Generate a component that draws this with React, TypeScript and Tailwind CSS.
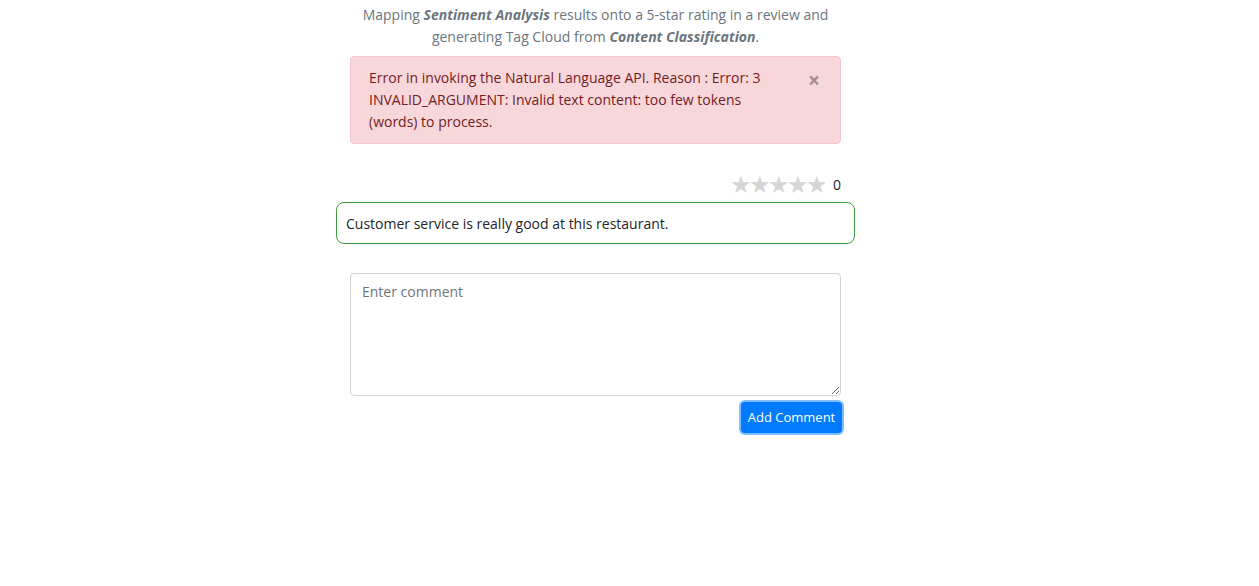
const font = { fontFamily: '"Open Sans", "Noto Sans", sans-serif' };

function Stars({ value }: { value: number }) {
  return (
    <div className="flex items-center justify-end gap-[8px] h-[22px]">
      <div className="flex text-[24px] leading-none text-[#d5d5d5] tracking-[-3px]">
        {[0, 1, 2, 3, 4].map(i => (
          <span key={i} className={i < value ? "text-[#f5b301]" : ""}>★</span>
        ))}
      </div>
      <span className="text-[14px] text-[#212529]">{value}</span>
    </div>
  );
}

export default function App() {
  return (
    <div className="min-h-[586px] bg-white" style={font}>
      <div className="pl-[336px]">
        <div className="w-[519px]">
          <p className="mt-[4px] text-center text-[14px] leading-[22px] text-[#6c757d]">
            Mapping <b><i>Sentiment Analysis</i></b> results onto a 5-star rating in a review and
            <br />
            generating Tag Cloud from <b><i>Content Classification</i></b>.
          </p>

          {/* Alert */}
          <div className="mx-[14px] mt-[8px] h-[88px] flex items-start justify-between rounded-[4px] border border-[#f5c6cb] bg-[#f8d7da] pl-[18px] pr-[20px] pt-[10px] text-[14px] leading-[22px] text-[#721c24]">
            <p>
              Error in invoking the Natural Language API. Reason : Error: 3
              <br />
              INVALID_ARGUMENT: Invalid text content: too few tokens
              <br />
              (words) to process.
            </p>
            <button className="mt-[2px] text-[21px] leading-[22px] font-bold text-[#a38e90]">×</button>
          </div>

          <div className="mx-[14px] mt-[29px]">
            <Stars value={0} />
          </div>

          <div className="mt-[7px] h-[42px] flex items-center rounded-[8px] border border-[#3f9c3f] px-[9px] text-[14px] text-[#212529]">
            Customer service is really good at this restaurant.
          </div>

          <div className="mx-[14px] mt-[29px] flex flex-col items-end">
            <textarea
              className="w-full h-[123px] rounded-[4px] border border-[#ced4da] px-[11px] pt-[8px] text-[14px] leading-[20px] text-[#495057] placeholder:text-[#6c757d] outline-none"
              placeholder="Enter comment"
            />
            <button className="mt-[6px] mr-[-1px] h-[31px] w-[101px] rounded-[4px] bg-[#007bff] text-[13px] font-medium text-white ring-[2px] ring-[#80bdff]">
              Add Comment
            </button>
          </div>
        </div>
      </div>
    </div>
  );
}
